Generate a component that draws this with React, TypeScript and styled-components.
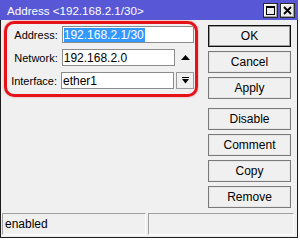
import styled, { createGlobalStyle } from "styled-components";

const GlobalStyle = createGlobalStyle`
    body {
        margin: 0;
        background: #ffffff;
        font-family: "Liberation Sans", Arial, sans-serif;
        font-size: 11px;
        color: #000;
    }
`;

const Window = styled.div`
    box-sizing: border-box;
    width: 298px;
    height: 238px;
    display: flex;
    flex-direction: column;
    background: #f0f0f0;
    border: 1px solid #1c1c1c;
    border-top: none;
`;

const TitleBar = styled.div`
    height: 20px;
    flex: none;
    display: flex;
    align-items: center;
    padding: 0 3px 0 7px;
    margin: 0 -1px;
    background: #5858d6;
`;

const TitleText = styled.div`
    flex: 1;
    color: #ffffff;
    font-size: 11.6px;
    white-space: nowrap;
`;

const TitleButtons = styled.div`
    display: flex;
    gap: 2px;
`;

const TitleButton = styled.div`
    box-sizing: border-box;
    width: 15px;
    height: 15px;
    display: flex;
    align-items: center;
    justify-content: center;
    background: #ececec;
    border: 1px solid #2a2a2a;
    box-shadow: inset -1px -1px 0 #a0a0a0, inset 1px 1px 0 #ffffff;
`;

const Body = styled.div`
    flex: 1;
    display: flex;
    flex-direction: column;
    padding: 1px 3px 2px 1px;
`;

const Main = styled.div`
    flex: 1;
    display: flex;
    gap: 10px;
    padding-left: 2px;
`;

const FieldGroup = styled.div`
    box-sizing: border-box;
    width: 194px;
    height: 76px;
    display: flex;
    flex-direction: column;
    gap: 6px;
    padding: 2px 1px 5px 0;
    border: 3px solid #e5121a;
    border-radius: 10px;
    box-shadow: 0 0 2px rgba(230, 20, 30, 0.5);
`;

const FieldRow = styled.div`
    display: flex;
    align-items: center;
    gap: 3px;
    height: 17px;
`;

const Label = styled.div`
    box-sizing: border-box;
    width: 52px;
    padding-right: 1px;
    text-align: right;
    white-space: nowrap;
    font-size: 11px;
`;

const Controls = styled.div`
    display: flex;
    align-items: center;
    gap: 2px;
    width: 133px;
`;

const Input = styled.div<{ $width: number }>`
    box-sizing: border-box;
    width: ${(p) => p.$width}px;
    height: 17px;
    display: flex;
    align-items: center;
    padding-left: 1px;
    background: #ffffff;
    border: 1px solid #8c8c8c;
    font-size: 12px;
    white-space: nowrap;
`;

const Selected = styled.span`
    background: #3399ff;
    color: #ffffff;
    line-height: 14px;
    padding-right: 1px;
`;

const ArrowSlot = styled.div`
    flex: 1;
    display: flex;
    justify-content: center;
`;

const DropButton = styled.div`
    box-sizing: border-box;
    width: 18px;
    height: 17px;
    display: flex;
    align-items: center;
    justify-content: center;
    background: #f0f0f0;
    border: 1px solid #9a9a9a;
`;

const ButtonColumn = styled.div`
    display: flex;
    flex-direction: column;
    gap: 4px;
    padding-top: 4px;
`;

const Button = styled.div<{ $primary?: boolean; $gapAbove?: boolean }>`
    box-sizing: border-box;
    width: 83px;
    height: 22px;
    display: flex;
    align-items: center;
    justify-content: center;
    margin-top: ${(p) => (p.$gapAbove ? "5px" : "0")};
    background: #f0f0f0;
    border: 1px solid ${(p) => (p.$primary ? "#111111" : "#7a7a7a")};
    box-shadow: inset 0 0 0 1px ${(p) => (p.$primary ? "#9a9a9a" : "#e6e6e6")};
    font-size: 12px;
`;

const StatusBar = styled.div`
    display: flex;
    gap: 2px;
    height: 22px;
`;

const StatusPanel = styled.div<{ $width: number }>`
    box-sizing: border-box;
    width: ${(p) => p.$width}px;
    display: flex;
    align-items: center;
    padding-left: 2px;
    border-top: 1px solid #a0a0a0;
    border-left: 1px solid #a0a0a0;
    border-bottom: 1px solid #ffffff;
    border-right: 1px solid #ffffff;
    font-size: 12px;
`;

const App = () => {
    return (
        <>
            <GlobalStyle />
            <Window>
                <TitleBar>
                    <TitleText>Address &lt;192.168.2.1/30&gt;</TitleText>
                    <TitleButtons>
                        <TitleButton>
                            <svg width="9" height="9" viewBox="0 0 9 9">
                                <rect x="0.5" y="1" width="8" height="7.5" fill="none" stroke="#000" strokeWidth="1" />
                                <rect x="0" y="0" width="9" height="2" fill="#000" />
                            </svg>
                        </TitleButton>
                        <TitleButton>
                            <svg width="9" height="9" viewBox="0 0 9 9">
                                <path d="M1 1 L8 8 M8 1 L1 8" stroke="#000" strokeWidth="1.8" />
                            </svg>
                        </TitleButton>
                    </TitleButtons>
                </TitleBar>
                <Body>
                    <Main>
                        <FieldGroup>
                            <FieldRow>
                                <Label>Address:</Label>
                                <Input $width={133}>
                                    <Selected>192.168.2.1/30</Selected>
                                </Input>
                            </FieldRow>
                            <FieldRow>
                                <Label>Network:</Label>
                                <Controls>
                                    <Input $width={113}>192.168.2.0</Input>
                                    <ArrowSlot>
                                        <svg width="9" height="5" viewBox="0 0 9 5">
                                            <polygon points="0,5 9,5 4.5,0" fill="#000" />
                                        </svg>
                                    </ArrowSlot>
                                </Controls>
                            </FieldRow>
                            <FieldRow>
                                <Label>Interface:</Label>
                                <Controls>
                                    <Input $width={113}>ether1</Input>
                                    <DropButton>
                                        <svg width="7" height="7" viewBox="0 0 7 7">
                                            <rect x="0" y="0" width="7" height="1" fill="#000" />
                                            <polygon points="0,2 7,2 3.5,6.5" fill="#000" />
                                        </svg>
                                    </DropButton>
                                </Controls>
                            </FieldRow>
                        </FieldGroup>
                        <ButtonColumn>
                            <Button $primary>OK</Button>
                            <Button>Cancel</Button>
                            <Button>Apply</Button>
                            <Button $gapAbove>Disable</Button>
                            <Button>Comment</Button>
                            <Button>Copy</Button>
                            <Button>Remove</Button>
                        </ButtonColumn>
                    </Main>
                    <StatusBar>
                        <StatusPanel $width={144}>enabled</StatusPanel>
                        <StatusPanel $width={146} />
                    </StatusBar>
                </Body>
            </Window>
        </>
    );
};

export default App;
